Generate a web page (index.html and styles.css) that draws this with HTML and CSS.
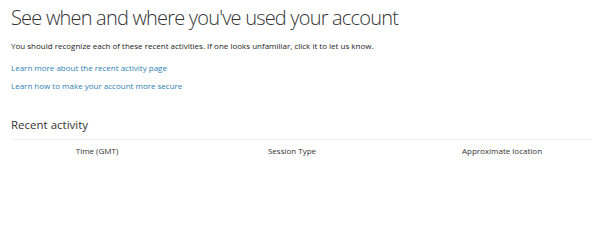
FILE: index.html
```html
<!DOCTYPE html>
<html>
<head>
<meta charset="UTF-8">
<title>Recent activity</title>
<link rel="stylesheet" href="styles.css">
</head>
<body>

<div class="page">
	<h1 class="title">See when and where you've used your account</h1>
	<p class="intro">You should recognize each of these recent activities. If one looks unfamiliar, click it to let us know.</p>

	<div class="links">
		<a href="#" class="lnk">Learn more about the recent activity page</a>
		<a href="#" class="lnk">Learn how to make your account more secure</a>
	</div>

	<h2 class="sub">Recent activity</h2>

	<div class="activity">
		<div class="head">
			<div class="col">Time (GMT)</div>
			<div class="col">Session Type</div>
			<div class="col">Approximate location</div>
		</div>
	</div>
</div>

</body>
</html>
```

FILE: styles.css
```css
* {font-family: "Open Sans", "Noto Sans", sans-serif;}
body {margin: 0; background-color: #ffffff; color: #222222;}
.page {padding: 0 0 0 11px;}
.title {margin: 0; padding-top: 4px; font-size: 20px; letter-spacing: -0.8px; font-weight: 300; color: #333333; line-height: 28px;}
.intro {margin: 8px 0 0 0; font-size: 8px; line-height: 12px; color: #222222;}
.links {display: flex; flex-direction: column; gap: 6px; margin-top: 10px;}
.lnk {font-size: 8px; line-height: 12px; color: #2f7fb3; text-decoration: none;}
.sub {margin: 25px 0 0 0; font-size: 11.5px; font-weight: 400; line-height: 16px; color: #333333;}
.activity {margin-top: 6px; border-top: 1px solid #f2f2f2;}
.head {display: grid; grid-template-columns: 172px 218px 202px; padding-top: 5px;}
.col {text-align: center; font-size: 8px; line-height: 12px; color: #333333;}
```
